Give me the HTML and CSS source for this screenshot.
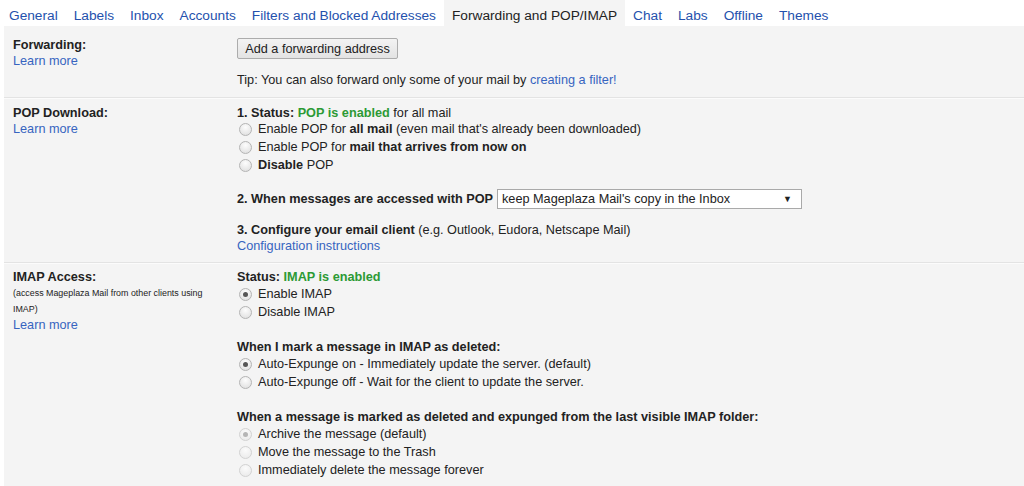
FILE: index.html
```html
<!DOCTYPE html>
<html>
<head>
<meta charset="utf-8">
<link rel="stylesheet" href="styles.css">
</head>
<body>
<nav class="tabs">
  <a class="tab">General</a>
  <a class="tab">Labels</a>
  <a class="tab">Inbox</a>
  <a class="tab">Accounts</a>
  <a class="tab">Filters and Blocked Addresses</a>
  <a class="tab active">Forwarding and POP/IMAP</a>
  <a class="tab">Chat</a>
  <a class="tab">Labs</a>
  <a class="tab">Offline</a>
  <a class="tab">Themes</a>
</nav>
<main class="panel">
  <section class="row row-fwd">
    <div class="label">
      <div class="title">Forwarding:</div>
      <a class="link">Learn more</a>
    </div>
    <div class="content">
      <button class="btn">Add a forwarding address</button>
      <div class="tip">Tip: You can also forward only some of your mail by <a class="link">creating a filter!</a></div>
    </div>
  </section>

  <section class="row row-pop">
    <div class="label">
      <div class="title">POP Download:</div>
      <a class="link">Learn more</a>
    </div>
    <div class="content">
      <div class="line"><b>1. Status: </b><b class="green">POP is enabled</b> for all mail</div>
      <label class="opt"><span class="radio"></span>Enable POP for&nbsp;<b>all mail</b>&nbsp;(even mail that's already been downloaded)</label>
      <label class="opt"><span class="radio"></span>Enable POP for&nbsp;<b>mail that arrives from now on</b></label>
      <label class="opt"><span class="radio"></span><b>Disable</b>&nbsp;POP</label>
      <div class="select-row"><b>2. When messages are accessed with POP</b>
        <div class="select"><span>keep Mageplaza Mail's copy in the Inbox</span><span class="arrow">▼</span></div>
      </div>
      <div class="line step3"><b>3. Configure your email client</b> (e.g. Outlook, Eudora, Netscape Mail)</div>
      <a class="link line">Configuration instructions</a>
    </div>
  </section>

  <section class="row row-imap">
    <div class="label">
      <div class="title">IMAP Access:</div>
      <div class="small">(access Mageplaza Mail from other clients using IMAP)</div>
      <a class="link">Learn more</a>
    </div>
    <div class="content">
      <div class="line"><b>Status: </b><b class="green">IMAP is enabled</b></div>
      <label class="opt"><span class="radio checked"></span>Enable IMAP</label>
      <label class="opt"><span class="radio"></span>Disable IMAP</label>
      <div class="line group"><b>When I mark a message in IMAP as deleted:</b></div>
      <label class="opt"><span class="radio checked"></span>Auto-Expunge on - Immediately update the server. (default)</label>
      <label class="opt"><span class="radio"></span>Auto-Expunge off - Wait for the client to update the server.</label>
      <div class="line group"><b>When a message is marked as deleted and expunged from the last visible IMAP folder:</b></div>
      <label class="opt"><span class="radio checked disabled"></span>Archive the message (default)</label>
      <label class="opt"><span class="radio disabled"></span>Move the message to the Trash</label>
      <label class="opt"><span class="radio disabled"></span>Immediately delete the message forever</label>
    </div>
  </section>
</main>
</body>
</html>
```

FILE: styles.css
```css
html, body {
  margin: 0;
  padding: 0;
  background: #fff;
}
body {
  font-family: "Liberation Sans", Arial, sans-serif;
  font-size: 12.7px;
  color: #222;
  width: 1024px;
  height: 486px;
  overflow: hidden;
}
.tabs {
  display: flex;
  height: 26px;
  padding-left: 1px;
  background: #fff;
}
.tab {
  padding: 0 8px;
  line-height: 31px;
  height: 26px;
  font-size: 13.7px;
  color: #2451ad;
  white-space: nowrap;
  cursor: pointer;
}
.tab.active {
  background: #f4f4f4;
  color: #222;
}
.panel {
  margin-left: 4px;
  background: #f4f4f4;
  height: 460px;
}
.row {
  display: grid;
  grid-template-columns: 224px 1fr;
  padding-left: 9px;
  border-bottom: 1px solid #e3e3e3;
  box-shadow: 0 1px 0 #fbfbfb;
  margin-bottom: 1px;
}
.row-imap { border-bottom: none; box-shadow: none; }
.label {
  display: flex;
  flex-direction: column;
  line-height: 16px;
}
.title { font-weight: bold; }
.link {
  color: #3764c0;
  cursor: pointer;
  text-decoration: none;
}
.label .link { align-self: flex-start; }
.content {
  display: flex;
  flex-direction: column;
  align-items: flex-start;
  line-height: 16px;
}
.line { display: block; }
.green { color: #2c9a35; }

.row-fwd { padding-top: 11px; padding-bottom: 9px; }
.row-fwd .content { padding-top: 1px; }
.btn {
  font-family: inherit;
  font-size: 12.7px;
  color: #222;
  height: 21px;
  width: 161px;
  padding: 0;
  border: 1px solid #acacac;
  border-radius: 2px;
  background: linear-gradient(#f3f3f3, #e3e3e3);
}
.tip { margin-top: 13px; }

.row-pop { padding-top: 6px; padding-bottom: 8px; }
.row-pop .opt:first-of-type { margin-top: -1px; }
.opt {
  display: flex;
  align-items: center;
  height: 18px;
  white-space: nowrap;
}
.radio {
  width: 11px;
  height: 11px;
  border-radius: 50%;
  border: 1px solid #b4b4b4;
  background: radial-gradient(circle at 50% 30%, #fdfdfd, #dcdcdc);
  margin: 0 6px 0 2px;
  position: relative;
  flex: none;
}
.radio.checked::after {
  content: "";
  position: absolute;
  left: 3px;
  top: 3px;
  width: 5px;
  height: 5px;
  border-radius: 50%;
  background: #555;
}
.radio.disabled {
  border-color: #d2d2d2;
  background: radial-gradient(circle at 50% 30%, #fbfbfb, #e8e8e8);
}
.radio.disabled.checked::after { background: #b5b5b5; }

.select-row {
  display: flex;
  align-items: center;
  margin-top: 15px;
  height: 20px;
}
.select {
  margin-left: 4px;
  height: 18px;
  border: 1px solid #a9a9a9;
  background: #fff;
  display: flex;
  align-items: center;
  justify-content: space-between;
  padding: 0 9px 0 4px;
  box-sizing: content-box;
  width: 290px;
}
.arrow { font-size: 9px; }
.step3 { margin-top: 13px; }

.row-imap { padding-top: 5px; }
.small {
  font-size: 8.9px;
  line-height: 16px;
  width: 200px;
}
.group { margin-top: 18px; }
```
